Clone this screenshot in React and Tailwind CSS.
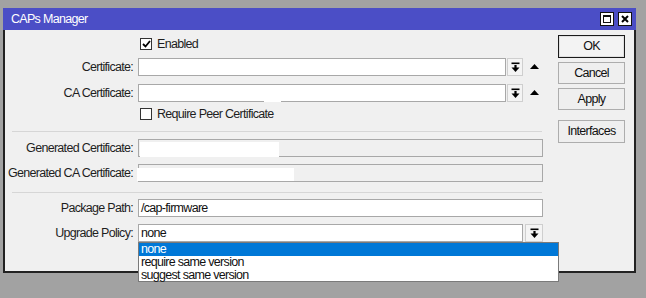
import React from 'react';

const font = { fontFamily: '"Liberation Sans", Arial, sans-serif' };

const DropIcon = () => (
  <svg width="9" height="11" viewBox="0 0 9 11">
    <rect x="0.5" y="0.5" width="8" height="1.6" fill="#000" />
    <rect x="3.4" y="3" width="2.2" height="3" fill="#000" />
    <polygon points="0.5,5.5 8.5,5.5 4.5,10" fill="#000" />
  </svg>
);

const UpTriangle = () => (
  <svg width="9" height="5" viewBox="0 0 9 5">
    <polygon points="0,5 9,5 4.5,0" fill="#000" />
  </svg>
);

const Label = ({ children }) => (
  <div className="w-[128px] shrink-0 whitespace-nowrap text-right text-[#1e1e1e]">{children}</div>
);

const Check = ({ checked, label }) => (
  <div className="flex h-[16px] items-center">
    <div className="w-[134px] shrink-0" />
    <div className="ml-[1px] flex h-[12px] w-[12px] items-center justify-center border border-[#333] bg-white">
      {checked && (
        <svg width="9" height="8" viewBox="0 0 9 8">
          <path d="M1 4 L3.5 6.5 L8 1" stroke="#000" strokeWidth="1.8" fill="none" />
        </svg>
      )}
    </div>
    <span className="ml-[5px] text-[#1e1e1e]">{label}</span>
  </div>
);

const DropButton = ({ w = 'w-[16px]' }) => (
  <div className={`flex h-[18px] ${w} items-center justify-center border border-[#cfcfcf] bg-[#f4f4f4]`}>
    <DropIcon />
  </div>
);

const Separator = ({ mt }) => <div className={`${mt} ml-[7px] mr-[1px] h-px bg-[#d6d6d6]`} />;

export default function App() {
  return (
    <div
      className="h-[298px] w-[646px] overflow-hidden bg-[#a2a2a2] pl-[3px] pt-[8px] text-[12.5px] leading-none tracking-[-0.7px]"
      style={font}
    >
      <div className="flex h-[265px] w-[633px] flex-col border-2 border-t-0 border-[#222] bg-[#f0f0f0]">
        {/* title bar */}
        <div className="-mx-[2px] flex h-[22px] shrink-0 items-center bg-[#4b4ec6] pl-[8px] pr-[4px]">
          <span className="text-white">CAPs Manager</span>
          <div className="ml-auto flex gap-[4px]">
            <div className="flex h-[14px] w-[14px] items-center justify-center border border-[#111] bg-white">
              <div className="h-[8px] w-[8px] border border-[#111] border-t-2" />
            </div>
            <div className="flex h-[14px] w-[14px] items-center justify-center border border-[#111] bg-white">
              <svg width="8" height="8" viewBox="0 0 8 8">
                <path d="M1 1 L7 7 M7 1 L1 7" stroke="#000" strokeWidth="2" />
              </svg>
            </div>
          </div>
        </div>

        <div className="flex">
          {/* form column */}
          <div className="w-[538px] pt-[6px]">
            <Check checked label="Enabled" />

            <div className="mt-[6px] flex h-[18px] items-center">
              <Label>Certificate:</Label>
              <div className="ml-[5px] h-[18px] w-[368px] border border-[#a8a8a8] bg-white" />
              <div className="ml-[1px]"><DropButton /></div>
              <div className="ml-[7px] pb-[2px]"><UpTriangle /></div>
            </div>

            <div className="mt-[8px] flex h-[18px] items-center">
              <Label>CA Certificate:</Label>
              <div className="relative ml-[5px] h-[18px] w-[368px] border border-[#a8a8a8] bg-white">
                <div className="absolute -bottom-[1px] left-[125px] h-[3px] w-[17px] bg-white" />
              </div>
              <div className="ml-[1px]"><DropButton /></div>
              <div className="ml-[7px] pb-[2px]"><UpTriangle /></div>
            </div>

            <div className="mt-[4px]">
              <Check label="Require Peer Certificate" />
            </div>

            <Separator mt="mt-[9px]" />

            <div className="mt-[7px] flex h-[18px] items-center">
              <Label>Generated Certificate:</Label>
              <div className="relative ml-[5px] h-[18px] flex-1 border border-[#a8a8a8] bg-[#f0f0f0]">
                <div className="absolute left-[1px] top-[2px] h-[15px] w-[139px] bg-white" />
              </div>
            </div>

            <div className="mt-[7px] flex h-[18px] items-center">
              <Label>Generated CA Certificate:</Label>
              <div className="relative ml-[5px] h-[18px] flex-1 border border-[#a8a8a8] bg-[#f0f0f0]">
                <div className="absolute -left-[2px] top-[3px] h-[13px] w-[157px] bg-white" />
              </div>
            </div>

            <Separator mt="mt-[10px]" />

            <div className="mt-[6px] flex h-[18px] items-center">
              <Label>Package Path:</Label>
              <div className="ml-[5px] flex h-[18px] flex-1 items-center border border-[#a8a8a8] bg-white pl-[2px] text-[#111]">
                /cap-firmware
              </div>
            </div>

            <div className="mt-[7px] flex h-[18px] items-center">
              <Label>Upgrade Policy:</Label>
              <div className="relative ml-[5px] flex h-[18px] w-[385px] items-center border border-[#a8a8a8] bg-white pl-[2px] text-[#111]">
                none
                {/* open list */}
                <div className="absolute -left-px top-[17px] z-10 w-[421px] border border-[#7a7a7a] bg-white text-[#111]">
                  <div className="flex h-[13px] items-center bg-[#0078d7] pl-[2px] text-white">none</div>
                  <div className="flex h-[13px] items-center pl-[2px]">require same version</div>
                  <div className="flex h-[12px] items-center pl-[2px]">suggest same version</div>
                </div>
              </div>
              <div className="ml-[2px]"><DropButton w="w-[18px]" /></div>
            </div>
          </div>

          {/* buttons column */}
          <div className="ml-[15px] flex w-[67px] flex-col pt-[5px] text-[#111]">
            <div className="flex h-[23px] items-center justify-center border border-[#1a1a1a] bg-[#f3f3f3] shadow-[inset_0_0_0_1px_#e0e0e0]">OK</div>
            <div className="mt-[4px] flex h-[22px] items-center justify-center border border-[#adadad] bg-[#efefef]">Cancel</div>
            <div className="mt-[4px] flex h-[22px] items-center justify-center border border-[#adadad] bg-[#efefef]">Apply</div>
            <div className="mt-[10px] flex h-[23px] items-center justify-center border border-[#adadad] bg-[#efefef]">Interfaces</div>
          </div>
        </div>
      </div>
    </div>
  );
}
